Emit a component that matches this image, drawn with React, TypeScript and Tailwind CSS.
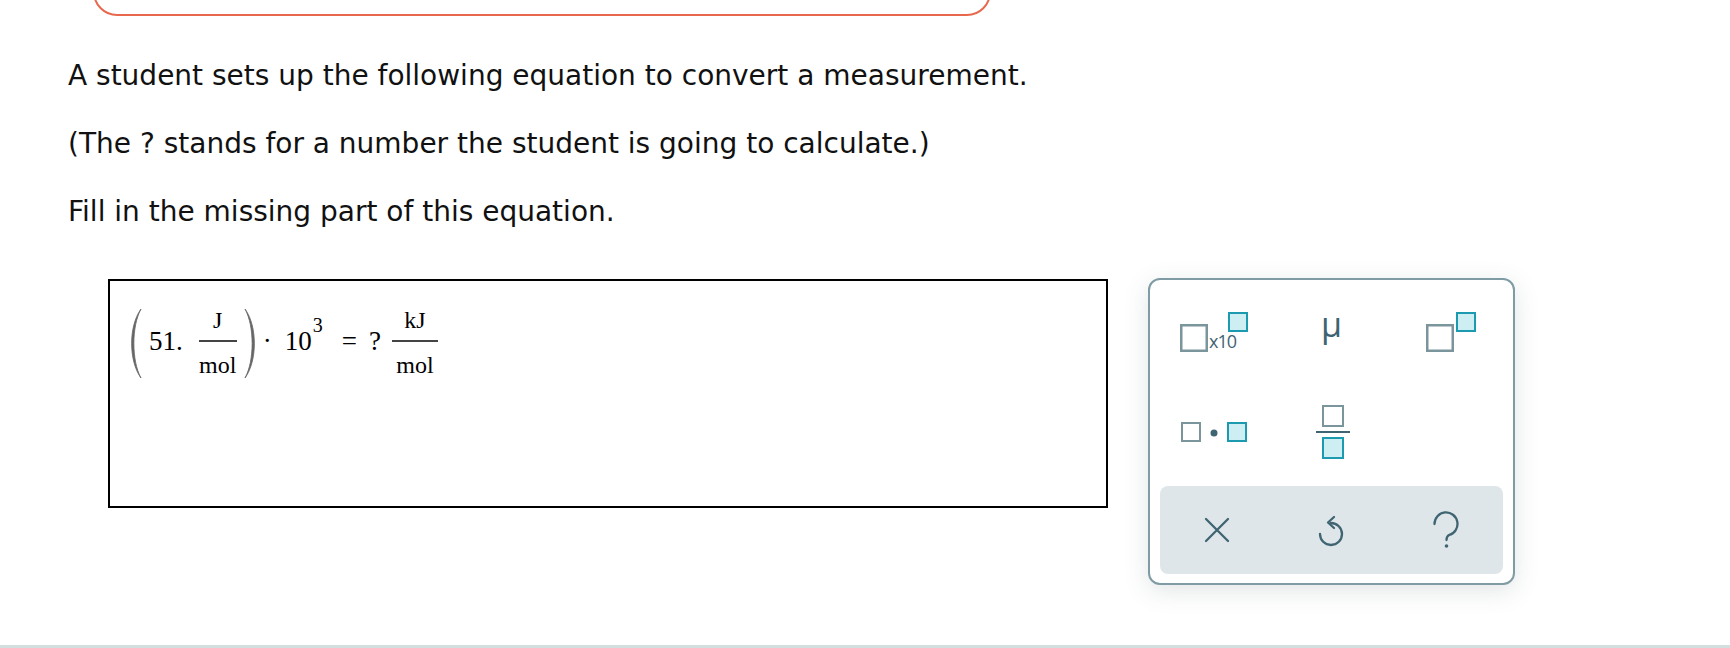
import React from "react";

const ink = "#3f6472";
const gray = "#7a959c";
const teal = "#1b9ab0";
const tealFill = "#cdeef3";

function SciIcon() {
  return (
    <svg width="68" height="40" viewBox="0 0 68 40" className="mr-[6px]">
      <rect x="1.25" y="13.25" width="25.5" height="25.5" fill="white" stroke={gray} strokeWidth="2.5" />
      <text x="29" y="36" fontSize="18" fill={ink} fontFamily="'Open Sans', sans-serif" letterSpacing="-1">
        x10
      </text>
      <rect x="49" y="1" width="18" height="18" fill={tealFill} stroke={teal} strokeWidth="2" />
    </svg>
  );
}

function SupIcon() {
  return (
    <svg width="50" height="40" viewBox="0 0 50 40" className="ml-[10px]">
      <rect x="1.25" y="13.25" width="25.5" height="25.5" fill="white" stroke={gray} strokeWidth="2.5" />
      <rect x="31" y="1" width="18" height="18" fill={tealFill} stroke={teal} strokeWidth="2" />
    </svg>
  );
}

function DotIcon() {
  return (
    <svg width="66" height="20" viewBox="0 0 66 20" className="mr-[6px]">
      <rect x="1" y="1" width="18" height="18" fill="white" stroke={gray} strokeWidth="2" />
      <circle cx="33" cy="11" r="3.5" fill={ink} />
      <rect x="47" y="1" width="18" height="18" fill={tealFill} stroke={teal} strokeWidth="2" />
    </svg>
  );
}

function FracIcon() {
  return (
    <svg width="34" height="54" viewBox="0 0 34 54" className="ml-[3px]">
      <rect x="7" y="1" width="20" height="20" fill="white" stroke={gray} strokeWidth="2" />
      <line x1="0" y1="27" x2="34" y2="27" stroke={ink} strokeWidth="2" />
      <rect x="7" y="33" width="20" height="20" fill={tealFill} stroke={teal} strokeWidth="2" />
    </svg>
  );
}

function Paren({ right }: { right?: boolean }) {
  return (
    <svg width="12" height="74" viewBox="0 0 12 74" className={right ? "-scale-x-100" : ""}>
      <path
        d="M11 5 C -1.5 22, -1.5 57, 11 74 C 1.5 57, 1.5 22, 11 5 Z"
        fill="#666"
        stroke="#666"
        strokeWidth="0.8"
        strokeLinejoin="round"
      />
    </svg>
  );
}

function Frac({ top, width, className }: { top: string; width: string; className?: string }) {
  return (
    <div className={"flex flex-col items-center mt-[3px] text-[24px] leading-none " + (className ?? "")}>
      <span className="pb-[8px]">{top}</span>
      <span className={"h-[1.5px] bg-[#444] " + width} />
      <span className="pt-[11px]">mol</span>
    </div>
  );
}

export default function App() {
  return (
    <div className="h-[648px] overflow-hidden bg-white flex flex-col">
      <div className="-mt-[44px] ml-[93px] w-[898px] h-[60px] shrink-0 rounded-[24px] border-2 border-[#e8684e]" />

      <div className="ml-[68px] mt-[26px] text-[28px] leading-[68px] text-[#111] font-['DejaVu_Sans',sans-serif]">
        <p>A student sets up the following equation to convert a measurement.</p>
        <p>(The ? stands for a number the student is going to calculate.)</p>
        <p>Fill in the missing part of this equation.</p>
      </div>

      <div className="mt-[33px] ml-[108px] flex items-start gap-[40px]">
        <div className="w-[1000px] h-[229px] border-2 border-black">
          <div className="pl-[20px] pt-[23px] flex items-center text-[27px] leading-none text-black font-['Liberation_Serif',serif]">
            <Paren />
            <span className="ml-[7px]">51.</span>
            <Frac top="J" width="w-[38px]" className="ml-[16px]" />
            <span className="ml-[7px]">
              <Paren right />
            </span>
            <span className="ml-[7px]">·</span>
            <span className="ml-[13px]">10</span>
            <span className="ml-[1px] mb-[33px] text-[20px]">3</span>
            <span className="ml-[19px]">=</span>
            <span className="ml-[12px]">?</span>
            <Frac top="kJ" width="w-[46px]" className="ml-[11px]" />
          </div>
        </div>

        <div className="w-[367px] h-[307px] -mt-[1px] rounded-[12px] border-2 border-[#7f9ba3] bg-white shadow-[0_6px_24px_rgba(60,80,90,0.15)] flex flex-col px-[10px] pt-[2px] pb-[9px]">
          <div className="grid grid-cols-3 h-[100px] items-center justify-items-center">
            <SciIcon />
            <span className="mb-[16px] text-[34px] leading-none text-[#3d6470] font-['Open_Sans',sans-serif]">μ</span>
            <SupIcon />
          </div>
          <div className="grid grid-cols-3 h-[100px] items-center justify-items-center">
            <DotIcon />
            <FracIcon />
            <span />
          </div>
          <div className="mt-[4px] h-[88px] rounded-[8px] bg-[#dfe6e9] grid grid-cols-3 items-center justify-items-center">
            <svg width="26" height="26" viewBox="0 0 26 26">
              <path d="M2 2 L24 24 M24 2 L2 24" stroke={ink} strokeWidth="2.3" strokeLinecap="round" />
            </svg>
            <svg width="28" height="36" viewBox="0 0 28 36">
              <path
                d="M3 22 A11 11 0 1 0 14 11"
                fill="none"
                stroke={ink}
                strokeWidth="2.3"
                strokeLinecap="round"
              />
              <path d="M17 5 L11 10.5 L17 16" fill="none" stroke={ink} strokeWidth="2.3" strokeLinecap="round" strokeLinejoin="round" />
            </svg>
            <svg width="28" height="38" viewBox="0 0 28 38">
              <path
                d="M2.5 13 A11.5 11.5 0 1 1 17 24 Q14.5 25.5 14.5 29"
                fill="none"
                stroke={ink}
                strokeWidth="2.3"
                strokeLinecap="round"
              />
              <circle cx="14.5" cy="35" r="1.8" fill={ink} />
            </svg>
          </div>
        </div>
      </div>

      <div className="mt-auto h-[3px] shrink-0 bg-[#d3dede]" />
    </div>
  );
}
